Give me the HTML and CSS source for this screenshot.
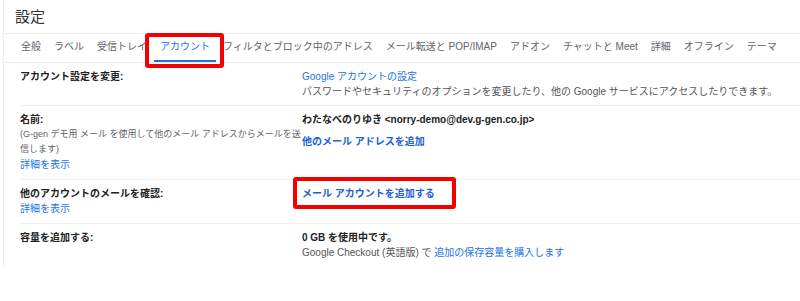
FILE: index.html
```html
<!DOCTYPE html>
<html lang="ja">
<head>
<meta charset="utf-8">
<title>設定</title>
<link rel="stylesheet" href="styles.css">
</head>
<body>
<div class="page">
  <header class="title-bar"><h1 class="title">設定</h1></header>
  <nav class="tabs">
    <span class="tab">全般</span>
    <span class="tab">ラベル</span>
    <span class="tab">受信トレイ</span>
    <span class="tab tab-active">アカウント<span class="callout callout-tab"></span></span>
    <span class="tab">フィルタとブロック中のアドレス</span>
    <span class="tab">メール転送と POP/IMAP</span>
    <span class="tab">アドオン</span>
    <span class="tab">チャットと Meet</span>
    <span class="tab">詳細</span>
    <span class="tab">オフライン</span>
    <span class="tab">テーマ</span>
  </nav>
  <div class="rows">
    <div class="row row-first">
      <div class="label-col"><div class="label">アカウント設定を変更:</div></div>
      <div class="value-col">
        <div><a class="link" href="#">Google アカウントの設定</a></div>
        <div class="muted">パスワードやセキュリティのオプションを変更したり、他の Google サービスにアクセスしたりできます。</div>
      </div>
    </div>
    <div class="row">
      <div class="label-col">
        <div class="label">名前:</div>
        <div class="desc">(G-gen デモ用 メール を使用して他のメール アドレスからメールを送信します)</div>
        <div><a class="link" href="#">詳細を表示</a></div>
      </div>
      <div class="value-col">
        <div class="strong">わたなべのりゆき &lt;norry-demo@dev.g-gen.co.jp&gt;</div>
        <div class="add-address"><a class="link strong" href="#">他のメール アドレスを追加</a></div>
      </div>
    </div>
    <div class="row">
      <div class="label-col">
        <div class="label">他のアカウントのメールを確認:</div>
        <div><a class="link" href="#">詳細を表示</a></div>
      </div>
      <div class="value-col">
        <span class="highlight"><a class="link strong" href="#">メール アカウントを追加する</a><span class="callout callout-row"></span></span>
      </div>
    </div>
    <div class="row">
      <div class="label-col"><div class="label">容量を追加する:</div></div>
      <div class="value-col">
        <div class="strong">0 GB を使用中です。</div>
        <div class="muted">Google Checkout (英語版) で <a class="link" href="#">追加の保存容量を購入します</a></div>
      </div>
    </div>
  </div>
</div>
</body>
</html>
```
FILE: styles.css
```css
body {
  margin: 0;
  background: #fff;
  color: #222;
  font-family: "Liberation Sans", "Noto Sans CJK JP", sans-serif;
}

.page {
  margin-left: 3px;
  border-left: 1px solid #f0f0f0;
}

.title-bar {
  height: 33px;
  display: flex;
  align-items: center;
  padding-left: 11px;
  border-bottom: 1px solid #eeeeee;
}

.title {
  margin: 0;
  font-size: 15px;
  font-weight: 400;
  line-height: 20px;
  color: #333;
}

.tabs {
  display: flex;
  gap: 1px;
  height: 28px;
  padding-left: 11px;
  border-bottom: 1px solid #eeeeee;
}

.tab {
  position: relative;
  padding: 0 6px;
  font-size: 10px;
  line-height: 26px;
  height: 28px;
  box-sizing: border-box;
  border-bottom: 2px solid transparent;
  color: #5f6368;
  white-space: nowrap;
}

.tab-active {
  color: #1a73e8;
  border-bottom-color: #1a73e8;
}

.callout {
  position: absolute;
  box-sizing: border-box;
  border: 4px solid #f40000;
  border-radius: 3px;
  pointer-events: none;
}

.callout-tab {
  left: -9px;
  top: -1px;
  width: 79px;
  height: 35px;
}

.rows {
  margin-left: 16px;
}

.row {
  display: grid;
  grid-template-columns: 282px 1fr;
  padding: 6px 0 7px;
  border-bottom: 1px solid #eeeeee;
  font-size: 10px;
  line-height: 15px;
}

.row:last-child {
  border-bottom: none;
}

.row-first {
  padding-bottom: 6px;
}

.label {
  font-weight: 700;
  color: #222;
}

.desc {
  font-size: 9px;
  color: #5f6368;
}

.muted {
  color: #555;
}

.strong {
  font-weight: 700;
}

.link {
  color: #1a73e8;
  text-decoration: none;
}

.link.strong {
  color: #1a5fd6;
}

.add-address {
  margin-top: 7px;
}

.highlight {
  position: relative;
  display: inline-block;
}

.callout-row {
  left: -9px;
  top: -9px;
  width: 163px;
  height: 32px;
}
```
